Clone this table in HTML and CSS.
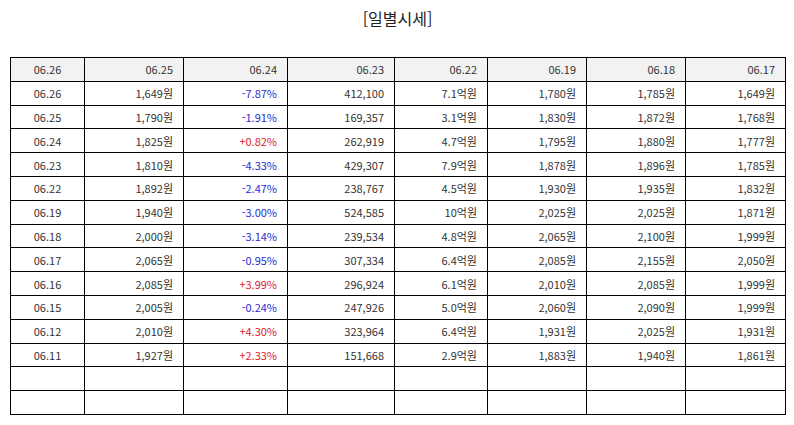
FILE: index.html
```html
<!DOCTYPE html>
<html lang="ko">
<head>
<meta charset="utf-8">
<title>일별시세</title>
<link rel="stylesheet" href="styles.css">
</head>
<body>
<div class="page">
  <h1 class="title">[일별시세]</h1>
  <table class="grid">
    <colgroup>
      <col class="c1"><col class="c2"><col class="c3"><col class="c4"><col class="c5"><col class="c6"><col class="c7"><col class="c8">
    </colgroup>
    <thead>
      <tr><th class="ctr">06.26</th><th>06.25</th><th>06.24</th><th>06.23</th><th>06.22</th><th>06.19</th><th>06.18</th><th>06.17</th></tr>
    </thead>
    <tbody>
      <tr><td class="ctr">06.26</td><td>1,649원</td><td class="dn">-7.87%</td><td>412,100</td><td>7.1억원</td><td>1,780원</td><td>1,785원</td><td>1,649원</td></tr>
      <tr><td class="ctr">06.25</td><td>1,790원</td><td class="dn">-1.91%</td><td>169,357</td><td>3.1억원</td><td>1,830원</td><td>1,872원</td><td>1,768원</td></tr>
      <tr><td class="ctr">06.24</td><td>1,825원</td><td class="up">+0.82%</td><td>262,919</td><td>4.7억원</td><td>1,795원</td><td>1,880원</td><td>1,777원</td></tr>
      <tr><td class="ctr">06.23</td><td>1,810원</td><td class="dn">-4.33%</td><td>429,307</td><td>7.9억원</td><td>1,878원</td><td>1,896원</td><td>1,785원</td></tr>
      <tr><td class="ctr">06.22</td><td>1,892원</td><td class="dn">-2.47%</td><td>238,767</td><td>4.5억원</td><td>1,930원</td><td>1,935원</td><td>1,832원</td></tr>
      <tr><td class="ctr">06.19</td><td>1,940원</td><td class="dn">-3.00%</td><td>524,585</td><td>10억원</td><td>2,025원</td><td>2,025원</td><td>1,871원</td></tr>
      <tr><td class="ctr">06.18</td><td>2,000원</td><td class="dn">-3.14%</td><td>239,534</td><td>4.8억원</td><td>2,065원</td><td>2,100원</td><td>1,999원</td></tr>
      <tr><td class="ctr">06.17</td><td>2,065원</td><td class="dn">-0.95%</td><td>307,334</td><td>6.4억원</td><td>2,085원</td><td>2,155원</td><td>2,050원</td></tr>
      <tr><td class="ctr">06.16</td><td>2,085원</td><td class="up">+3.99%</td><td>296,924</td><td>6.1억원</td><td>2,010원</td><td>2,085원</td><td>1,999원</td></tr>
      <tr><td class="ctr">06.15</td><td>2,005원</td><td class="dn">-0.24%</td><td>247,926</td><td>5.0억원</td><td>2,060원</td><td>2,090원</td><td>1,999원</td></tr>
      <tr><td class="ctr">06.12</td><td>2,010원</td><td class="up">+4.30%</td><td>323,964</td><td>6.4억원</td><td>1,931원</td><td>2,025원</td><td>1,931원</td></tr>
      <tr><td class="ctr">06.11</td><td>1,927원</td><td class="up">+2.33%</td><td>151,668</td><td>2.9억원</td><td>1,883원</td><td>1,940원</td><td>1,861원</td></tr>
      <tr><td></td><td></td><td></td><td></td><td></td><td></td><td></td><td></td></tr>
      <tr><td></td><td></td><td></td><td></td><td></td><td></td><td></td><td></td></tr>
    </tbody>
  </table>
</div>
</body>
</html>
```
FILE: styles.css
```css
html, body {
  margin: 0;
  padding: 0;
  background: #ffffff;
}
body {
  font-family: "Noto Sans CJK KR", "Noto Sans", "Open Sans", sans-serif;
  color: #333333;
}
.page {
  padding: 8px 9px 0 10px;
}
.title {
  margin: 0;
  height: 49px;
  font-size: 16px;
  font-weight: 400;
  line-height: 20px;
  text-align: center;
  color: #222222;
}
.grid {
  width: 776px;
  border-collapse: collapse;
  table-layout: fixed;
  font-size: 11px;
}
.c1 { width: 74px; }
.c2 { width: 99px; }
.c3 { width: 104px; }
.c4 { width: 107px; }
.c5 { width: 93px; }
.c6 { width: 99px; }
.c7 { width: 99px; }
.c8 { width: 100px; }
.grid th,
.grid td {
  border: 1px solid #000000;
  height: 22.8px;
  padding: 0 10px 0 4px;
  text-align: right;
  font-weight: 400;
  line-height: 14px;
  vertical-align: middle;
  white-space: nowrap;
}
.grid th {
  background: #f2f2f2;
}
.grid .ctr {
  text-align: center;
  padding: 0 4px;
}
.grid .dn { color: #2b2bd0; }
.grid .up { color: #d9232d; }
```
